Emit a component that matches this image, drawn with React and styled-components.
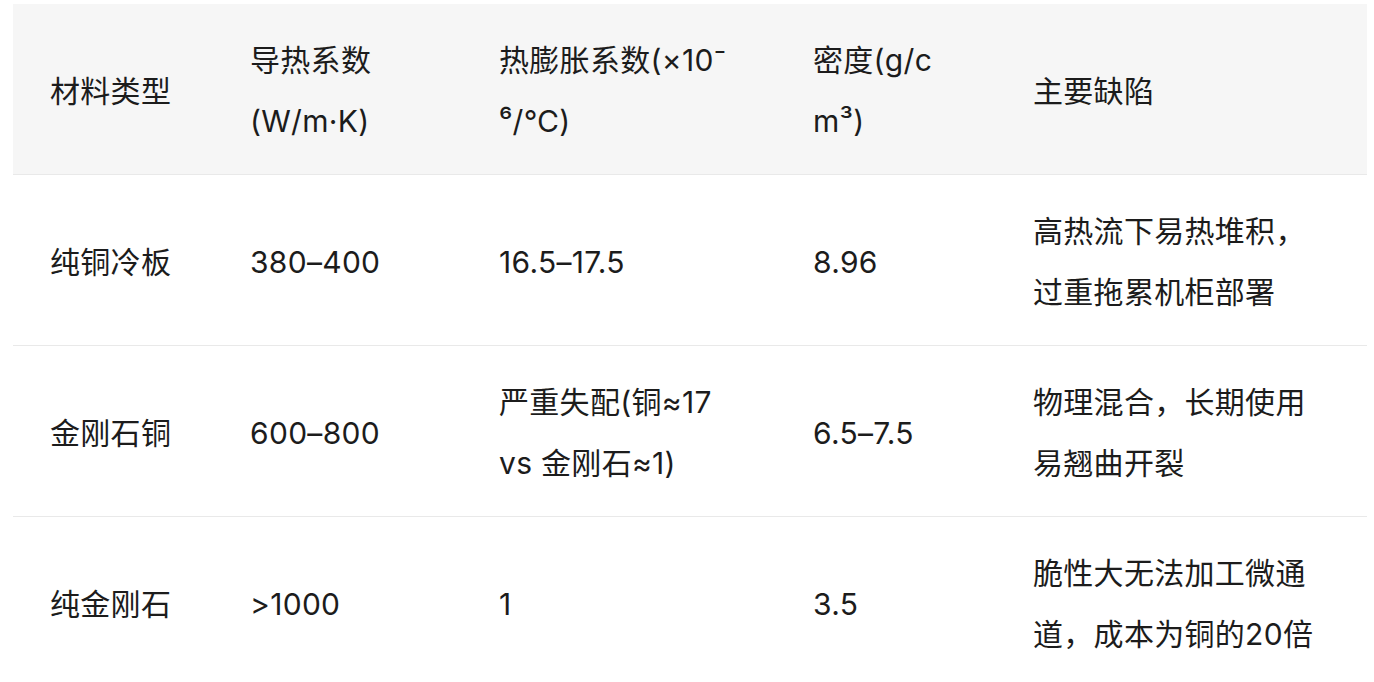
import React from 'react';
import styled, { createGlobalStyle } from 'styled-components';

const GlobalStyle = createGlobalStyle`
  html, body {
    margin: 0;
    padding: 0;
    background: #ffffff;
  }
  body {
    font-family: "Inter", "Noto Sans CJK SC", sans-serif;
    color: #1c1c1c;
  }
`;

const columns = [
  { key: 'type', width: 200 },
  { key: 'k', width: 249 },
  { key: 'cte', width: 314 },
  { key: 'density', width: 220 },
  { key: 'defect', width: 371 },
];

const header = [
  ['材料类型'],
  ['导热系数', '(W/m·K)'],
  ['热膨胀系数(×10⁻', '⁶/℃)'],
  ['密度(g/c', 'm³)'],
  ['主要缺陷'],
];

const rows = [
  [['纯铜冷板'], ['380–400'], ['16.5–17.5'], ['8.96'], ['高热流下易热堆积，', '过重拖累机柜部署']],
  [['金刚石铜'], ['600–800'], ['严重失配(铜≈17', 'vs 金刚石≈1)'], ['6.5–7.5'], ['物理混合，长期使用', '易翘曲开裂']],
  [['纯金刚石'], ['>1000'], ['1'], ['3.5'], ['脆性大无法加工微通', '道，成本为铜的20倍']],
];

const Page = styled.div`
  padding: 4px 7px 0 13px;
`;

const Table = styled.table`
  width: 1354px;
  border-collapse: collapse;
  table-layout: fixed;
  font-size: 30px;
  line-height: 61px;
`;

const HeadRow = styled.tr`
  background: #f6f6f6;
`;

const Row = styled.tr`
  border-top: 1px solid #e9e9e9;
`;

const Cell = styled.td`
  padding: 26px 37px 22px;
  vertical-align: middle;
  text-align: left;
  font-weight: 400;
  white-space: nowrap;
  letter-spacing: 0.3px;
`;

const Line = styled.span`
  display: block;
`;

const Content = ({ lines }) => lines.map((l, i) => <Line key={i}>{l}</Line>);

export default function App() {
  return (
    <>
      <GlobalStyle />
      <Page>
        <Table>
          <colgroup>
            {columns.map((c) => (
              <col key={c.key} style={{ width: c.width }} />
            ))}
          </colgroup>
          <thead>
            <HeadRow>
              {header.map((h, i) => (
                <Cell as="th" key={i}>
                  <Content lines={h} />
                </Cell>
              ))}
            </HeadRow>
          </thead>
          <tbody>
            {rows.map((r, ri) => (
              <Row key={ri}>
                {r.map((c, ci) => (
                  <Cell key={ci}>
                    <Content lines={c} />
                  </Cell>
                ))}
              </Row>
            ))}
          </tbody>
        </Table>
      </Page>
    </>
  );
}
